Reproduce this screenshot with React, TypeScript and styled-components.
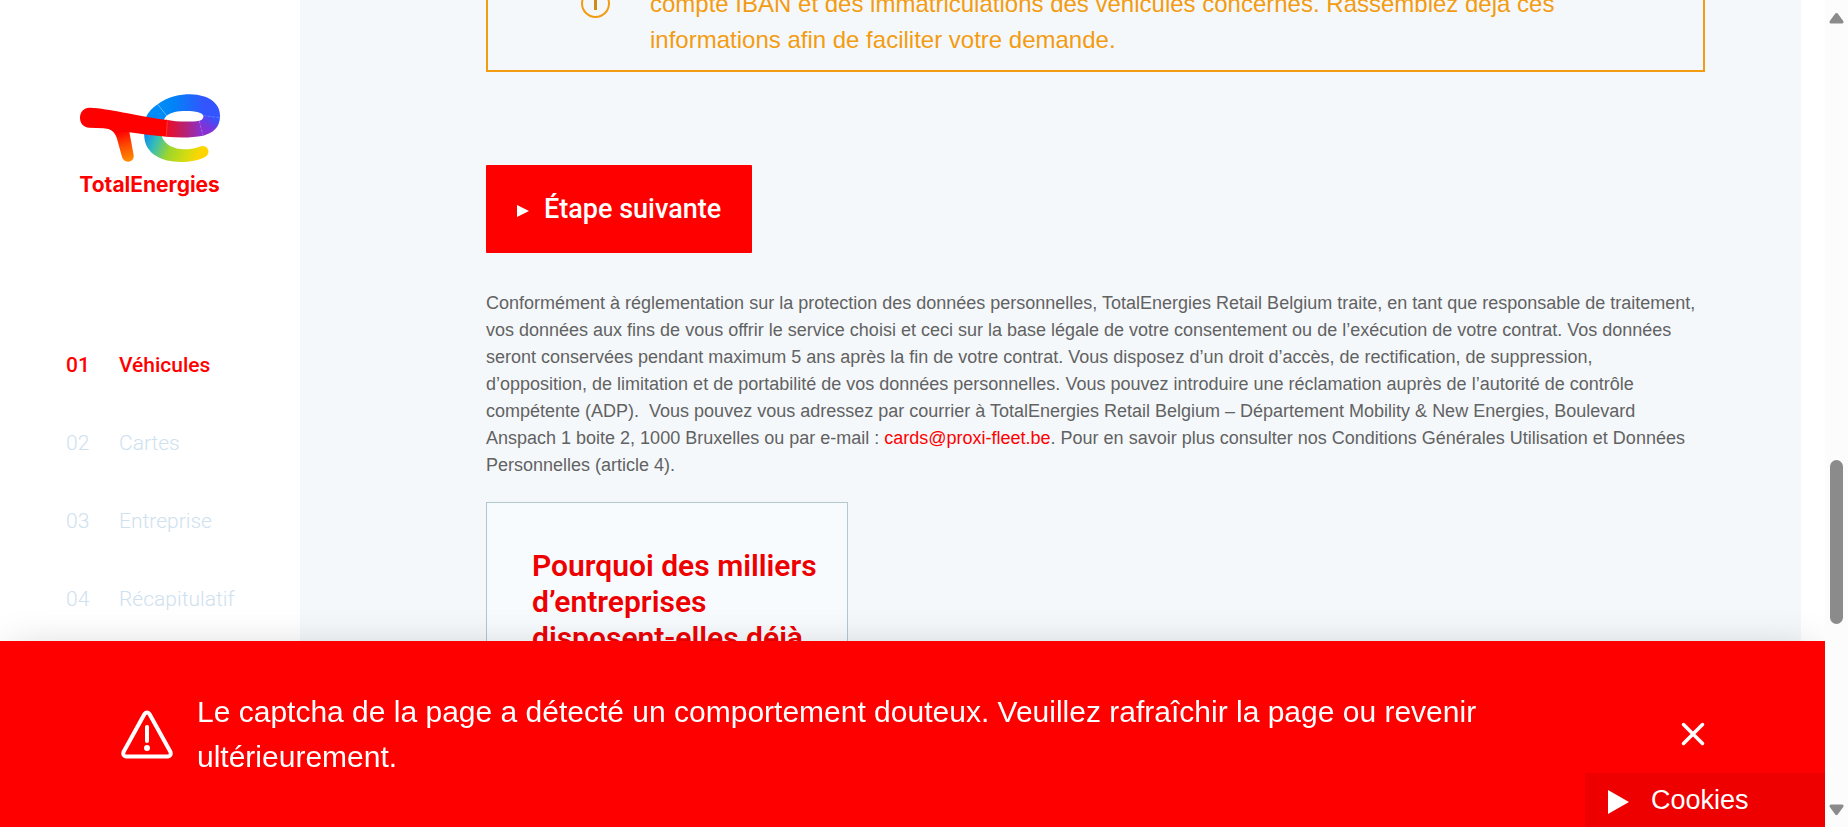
import React from "react";
import styled, { createGlobalStyle } from "styled-components";

const RED = "#ff0000";

const GlobalStyle = createGlobalStyle`
  *, *::before, *::after { box-sizing: border-box; }
  body {
    margin: 0;
    overflow: hidden;
    background: #fff;
    color: #626262;
    font-family: Arial, "Liberation Sans", sans-serif;
  }
  p, h2, ol { margin: 0; padding: 0; }
  button { border: 0; font: inherit; color: inherit; cursor: pointer; }
`;

const Page = styled.div`
  display: flex;
  height: 100vh;
  overflow: hidden;
`;

const Sidebar = styled.aside`
  flex: 0 0 300px;
  padding-top: 80px;
  background: #fff;
`;

const LogoLink = styled.a`
  display: block;
  width: 180px;
  height: 130px;
  margin: 0 60px 116px;
`;

const StepList = styled.ol`
  list-style: none;
  padding-left: 66px;
`;

const Step = styled.li`
  height: 78px;
`;

const StepLink = styled.a<{ $active?: boolean }>`
  display: flex;
  align-items: center;
  height: 78px;
  color: ${(p) => (p.$active ? RED : "#cfe1ef")};
  font-family: Roboto, sans-serif;
  font-size: 21px;
  font-weight: ${(p) => (p.$active ? 500 : 300)};
  text-decoration: none;
`;

const StepNumber = styled.span`
  width: 53px;
`;

const Content = styled.main`
  flex: 1;
  min-width: 0;
  margin-right: 24px;
  padding: 0 96px 0 186px;
  background: #f4f8fb;
`;

const Notice = styled.section`
  display: flex;
  align-items: flex-start;
  gap: 40px;
  margin-top: -14px;
  padding: 0 90px 12px;
  border: 2px solid #f39c12;
  border-top: 0;
  color: #f39c12;
  font-size: 24px;
  line-height: 36px;
`;

const NoticeIcon = styled.svg`
  flex: none;
  width: 32px;
  height: 36px;
`;

const NextButton = styled.button`
  display: flex;
  align-items: center;
  gap: 15px;
  height: 88px;
  margin-top: 93px;
  padding: 0 31px;
  border-radius: 1px;
  background: ${RED};
  color: #fff;
  font-family: Roboto, sans-serif;
  font-size: 27px;
  font-weight: 500;
`;

const Legal = styled.p`
  margin-top: 37px;
  padding-right: 8px;
  font-size: 18px;
  line-height: 27px;
`;

const MailLink = styled.a`
  color: ${RED};
  text-decoration: none;
`;

const Card = styled.section`
  width: 362px;
  height: 500px;
  margin-top: 23px;
  padding: 45px 24px 45px 45px;
  border: 1px solid #b2c8d0;
  background: #f7fbfe;
`;

const CardTitle = styled.h2`
  color: #ee0000;
  font-family: Roboto, sans-serif;
  font-size: 30px;
  font-weight: 600;
  line-height: 36px;
`;

const Scrollbar = styled.div`
  position: relative;
  z-index: 1;
  display: flex;
  flex: 0 0 23px;
  flex-direction: column;
  align-items: center;
  justify-content: space-between;
  padding: 12px 0 11px;
  background: #fcfcfc;
`;

const ScrollArrow = styled.svg`
  flex: none;
  width: 15px;
  height: 12px;
  fill: #8b8b8b;
  stroke: #8b8b8b;
  stroke-width: 3;
  stroke-linejoin: round;
`;

const ScrollTrack = styled.div`
  display: flex;
  flex: 1;
  flex-direction: column;
`;

const ScrollSpace = styled.div<{ $share: number }>`
  flex: ${(p) => p.$share} 0 0;
`;

const ScrollThumb = styled.div`
  flex: 164 0 0;
  width: 13px;
  border-radius: 7px;
  background: #8b8b8b;
`;

const Banner = styled.div`
  position: fixed;
  right: 23px;
  bottom: 0;
  left: 0;
  display: flex;
  align-items: center;
  min-height: 186px;
  padding: 0 120px;
  background: ${RED};
  box-shadow: 0 0 40px -10px rgba(0, 0, 0, 0.2);
  color: #fff;
  font-size: 30px;
  line-height: 45px;
`;

const WarningIcon = styled.svg`
  flex: none;
  width: 53px;
  height: 50px;
`;

const BannerText = styled.p`
  flex: 1;
  margin: 0 160px 0 24px;
`;

const CloseButton = styled.button`
  display: flex;
  padding: 0;
  background: none;
`;

const CookieButton = styled.button`
  position: fixed;
  right: 23px;
  bottom: 0;
  display: flex;
  align-items: center;
  gap: 22px;
  width: 240px;
  height: 54px;
  padding: 0 23px;
  background: #ee0000;
  color: #fff;
  font-size: 27px;
`;

const steps = ["Véhicules", "Cartes", "Entreprise", "Récapitulatif"];

function Logo() {
  return (
    <svg width="180" height="130" viewBox="0 0 540 390" role="img" aria-label="TotalEnergies">
      <defs>
        <linearGradient id="tail" x1="258" y1="150" x2="440" y2="225" gradientUnits="userSpaceOnUse">
          <stop offset="0" stopColor="#0a86f5" />
          <stop offset="0.2" stopColor="#35bdb8" />
          <stop offset="0.45" stopColor="#9ed62a" />
          <stop offset="0.72" stopColor="#d5dc10" />
          <stop offset="0.9" stopColor="#ffd500" />
        </linearGradient>
        <linearGradient id="crown" x1="300" y1="70" x2="455" y2="70" gradientUnits="userSpaceOnUse">
          <stop offset="0" stopColor="#008cf8" />
          <stop offset="0.25" stopColor="#0084f7" />
          <stop offset="0.85" stopColor="#3355ff" />
        </linearGradient>
        <linearGradient id="turn" x1="462" y1="112" x2="432" y2="160" gradientUnits="userSpaceOnUse">
          <stop offset="0" stopColor="#3355ff" />
          <stop offset="0.6" stopColor="#7a35dc" />
          <stop offset="1" stopColor="#8830d0" />
        </linearGradient>
        <linearGradient id="bar" x1="320" y1="0" x2="425" y2="0" gradientUnits="userSpaceOnUse">
          <stop offset="0" stopColor="#ee0c22" />
          <stop offset="0.5" stopColor="#b9206f" />
          <stop offset="1" stopColor="#8830d0" />
        </linearGradient>
        <linearGradient id="stem" x1="180" y1="155" x2="205" y2="240" gradientUnits="userSpaceOnUse">
          <stop offset="0" stopColor="#ff0000" />
          <stop offset="0.5" stopColor="#ff4a00" />
          <stop offset="1" stopColor="#ff8800" />
        </linearGradient>
      </defs>
      <path
        fill="url(#tail)"
        d="M258 112 C252 130 251 150 253 172 C257 222 305 246 362 246 C392 246 415 241 435 231 C445 226 448 213 443 206 C438 197 428 196 418 200 C372 216 318 209 304 166 L290 120 Z"
      />
      <path fill="#008cf8" d="M257 114 C264 98 275 84 293 73 L320 107 Q312 113 310 125 Z" />
      <path
        fill="url(#crown)"
        d="M293 73 C325 48 362 43 390 43 C450 44 483 73 480 113 L430 108 C428 98 408 93 377 93 C352 93 334 97 320 107 Z"
      />
      <path fill="url(#turn)" d="M480 112 C478 142 462 158 428 168 L417 123 C428 120 431 114 430 106 Z" />
      <path fill="url(#bar)" d="M318 119 C350 126 392 126 418 122 L429 167 C395 174 355 173 318 170 Z" />
      <path
        fill="url(#stem)"
        d="M140 145 C160 151 167 163 171 176 L186 231 C189 240 196 245 204 245 C216 245 222 236 221 226 L208 155 L190 140 Z"
      />
      <path
        fill="#ff0000"
        d="M90 83 C150 86 215 105 323 120 L320 170 C280 167 245 162 208 157 C190 155 175 157 166 161 C158 149 145 146 130 145 L88 143 C70 142 60 129 60 113 C60 95 73 82 90 83 Z"
      />
      <g stroke="#fff" strokeOpacity="0.3" strokeWidth="2" fill="none">
        <path d="M293 73 L320 107" />
        <path d="M430 107 L480 113" strokeDasharray="9 4" />
        <path d="M418 123 L429 167" strokeDasharray="9 4" />
        <path d="M322 121 L319 170" />
      </g>
      <text x="58" y="336" fill="#ff0000" fontFamily="Inter, sans-serif" fontSize="63" fontWeight="700">
        TotalEnergies
      </text>
    </svg>
  );
}

export default function App() {
  return (
    <>
      <GlobalStyle />
      <Page>
        <Sidebar>
          <LogoLink href="#accueil">
            <Logo />
          </LogoLink>
          <nav aria-label="Étapes">
            <StepList>
              {steps.map((label, i) => (
                <Step key={label}>
                  <StepLink href={`#etape-${i + 1}`} $active={i === 0}>
                    <StepNumber>{`0${i + 1}`}</StepNumber>
                    {label}
                  </StepLink>
                </Step>
              ))}
            </StepList>
          </nav>
        </Sidebar>

        <Content>
          <Notice>
            <NoticeIcon viewBox="0 0 32 36" aria-hidden="true">
              <circle cx="17.500" cy="17.500" r="13.500" fill="none" stroke="#f39c12" strokeWidth="2" />
              <path d="M17.500 12 V24" stroke="#cf8a1c" strokeWidth="3" />
            </NoticeIcon>
            <p>
              compte IBAN et des immatriculations des véhicules concernés. Rassemblez déjà ces informations afin de
              faciliter votre demande.
            </p>
          </Notice>

          <NextButton type="button">
            <svg width="12" height="15" viewBox="0 0 12 15" fill="#fff" aria-hidden="true">
              <path d="M0 3 L12 9 L0 15 Z" />
            </svg>
            Étape suivante
          </NextButton>

          <Legal>
            Conformément à réglementation sur la protection des données personnelles, TotalEnergies Retail Belgium
            traite, en tant que responsable de traitement, vos données aux fins de vous offrir le service choisi et ceci
            sur la base légale de votre consentement ou de l’exécution de votre contrat. Vos données seront conservées
            pendant maximum 5 ans après la fin de votre contrat. Vous disposez d’un droit d’accès, de rectification, de
            suppression, d’opposition, de limitation et de portabilité de vos données personnelles. Vous pouvez
            introduire une réclamation auprès de l’autorité de contrôle compétente (ADP).&nbsp; Vous pouvez vous adressez
            par courrier à TotalEnergies Retail Belgium – Département Mobility &amp; New Energies, Boulevard Anspach 1
            boite 2, 1000 Bruxelles ou par e-mail : <MailLink href="mailto:cards@proxi-fleet.be">cards@proxi-fleet.be</MailLink>. Pour en savoir plus consulter
            nos Conditions Générales Utilisation et Données Personnelles (article 4).
          </Legal>

          <Card>
            <CardTitle>Pourquoi des milliers d’entreprises disposent-elles déjà</CardTitle>
          </Card>
        </Content>

        <Scrollbar aria-hidden="true">
          <ScrollArrow viewBox="0 0 15 12">
            <path d="M7.5 2.500 L13 10 H2 Z" />
          </ScrollArrow>
          <ScrollTrack>
            <ScrollSpace $share={436} />
            <ScrollThumb />
            <ScrollSpace $share={180} />
          </ScrollTrack>
          <ScrollArrow viewBox="0 0 15 12">
            <path d="M7.5 9.500 L13 2 H2 Z" />
          </ScrollArrow>
        </Scrollbar>
      </Page>

      <Banner role="alert">
        <WarningIcon viewBox="0 0 53 50" fill="none" stroke="#fff" strokeLinecap="round" strokeLinejoin="round" aria-hidden="true">
          <path
            strokeWidth="4"
            d="M24.500 5 Q27 2 29.500 5 L50.500 43 Q51.500 47 48 47.500 H6 Q2.500 47 3.500 43 Z"
          />
          <path strokeWidth="4" d="M27 18 V32" />
          <circle cx="27" cy="39" r="3" fill="#fff" stroke="none" />
        </WarningIcon>
        <BannerText>
          Le captcha de la page a détecté un comportement douteux. Veuillez rafraîchir la page ou revenir
          ultérieurement.
        </BannerText>
        <CloseButton type="button" aria-label="Fermer">
          <svg width="24" height="24" viewBox="0 0 24 24" fill="none" stroke="#fff" strokeWidth="3.500" strokeLinecap="round">
            <path d="M2.500 2.500 L21.500 21.500 M21.500 2.500 L2.500 21.500" />
          </svg>
        </CloseButton>
      </Banner>

      <CookieButton type="button">
        <svg width="21" height="28" viewBox="0 0 21 28" fill="#fff" aria-hidden="true">
          <path d="M0 4 L21 16 L0 28 Z" />
        </svg>
        Cookies
      </CookieButton>
    </>
  );
}
